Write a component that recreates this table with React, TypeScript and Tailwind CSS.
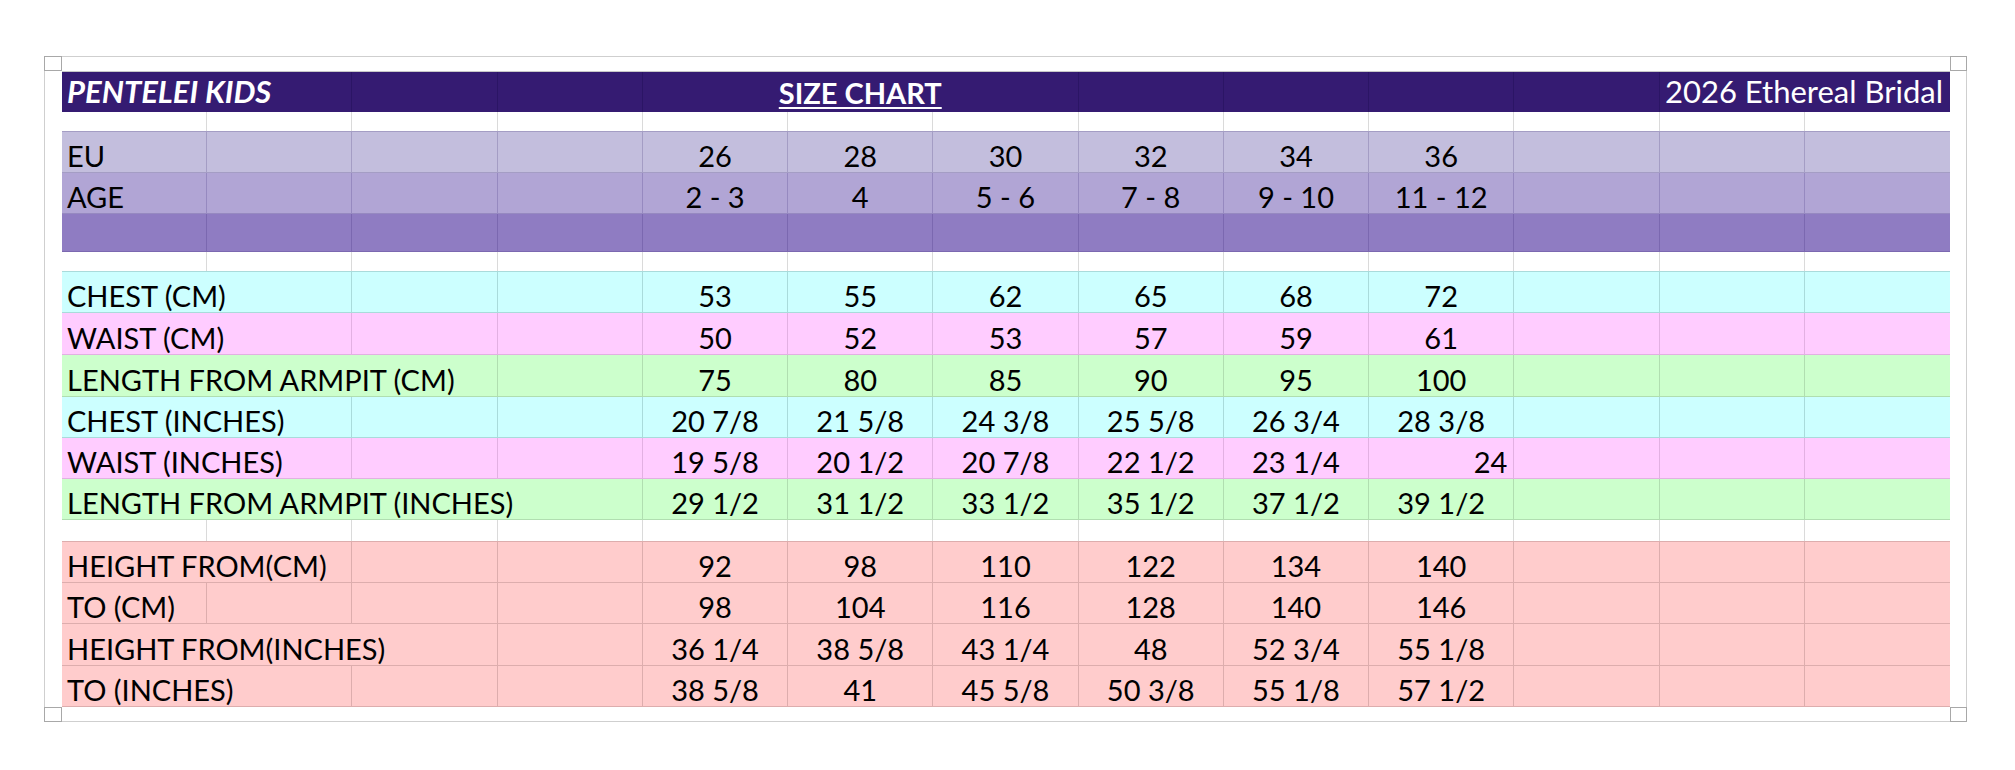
import React from "react";

type DataRow = {
  label: string;
  span: 1 | 2 | 3 | 4;
  values: string[];
  bg: string;
  line: string;
  h: string;
  rightLast?: boolean;
};

const spanCls = {
  1: "col-span-1",
  2: "col-span-2",
  3: "col-span-3",
  4: "col-span-4",
};

const empty6 = ["", "", "", "", "", ""];

const lav = { bg: "bg-[#c3bedd]", line: "border-[#a49dc4]" };
const age = { bg: "bg-[#b1a5d5]", line: "border-[#9689c0]" };
const deep = { bg: "bg-[#8f7cc2]", line: "border-[#7b68b0]" };
const cyan = { bg: "bg-[#ccffff]", line: "border-[#a9dbdb]" };
const pink = { bg: "bg-[#ffccff]", line: "border-[#e2b0e2]" };
const green = { bg: "bg-[#ccffcc]", line: "border-[#b0deb0]" };
const rose = { bg: "bg-[#ffcccc]", line: "border-[#ddadad]" };

const topRows: DataRow[] = [
  { label: "EU", span: 1, values: ["26", "28", "30", "32", "34", "36"], ...lav, h: "h-[41px]" },
  { label: "AGE", span: 1, values: ["2 - 3", "4", "5 - 6", "7 - 8", "9 - 10", "11 - 12"], ...age, h: "h-[41px]" },
  { label: "", span: 1, values: empty6, ...deep, h: "h-[38px]" },
];

const bodyRows: DataRow[] = [
  { label: "CHEST (CM)", span: 2, values: ["53", "55", "62", "65", "68", "72"], ...cyan, h: "h-[41px]" },
  { label: "WAIST (CM)", span: 2, values: ["50", "52", "53", "57", "59", "61"], ...pink, h: "h-[42px]" },
  { label: "LENGTH FROM ARMPIT (CM)", span: 3, values: ["75", "80", "85", "90", "95", "100"], ...green, h: "h-[42px]" },
  { label: "CHEST (INCHES)", span: 2, values: ["20 7/8", "21 5/8", "24 3/8", "25 5/8", "26 3/4", "28 3/8"], ...cyan, h: "h-[41px]" },
  { label: "WAIST (INCHES)", span: 2, values: ["19 5/8", "20 1/2", "20 7/8", "22 1/2", "23 1/4", "24"], ...pink, h: "h-[41px]", rightLast: true },
  { label: "LENGTH FROM ARMPIT (INCHES)", span: 4, values: ["29 1/2", "31 1/2", "33 1/2", "35 1/2", "37 1/2", "39 1/2"], ...green, h: "h-[41px]" },
];

const heightRows: DataRow[] = [
  { label: "HEIGHT FROM(CM)", span: 2, values: ["92", "98", "110", "122", "134", "140"], ...rose, h: "h-[41px]" },
  { label: "TO (CM)", span: 1, values: ["98", "104", "116", "128", "140", "146"], ...rose, h: "h-[41px]" },
  { label: "HEIGHT FROM(INCHES)", span: 3, values: ["36 1/4", "38 5/8", "43 1/4", "48", "52 3/4", "55 1/8"], ...rose, h: "h-[42px]" },
  { label: "TO (INCHES)", span: 2, values: ["38 5/8", "41", "45 5/8", "50 3/8", "55 1/8", "57 1/2"], ...rose, h: "h-[41px]" },
];

const text = "flex items-end pb-[2px] leading-none whitespace-nowrap";
const headText = "flex items-end pb-[5px] leading-none whitespace-nowrap";

function SizeRow({ row }: { row: DataRow }) {
  const fillers = 4 - row.span;
  return (
    <div className={`grid grid-cols-[repeat(13,minmax(0,1fr))] border-b ${row.h} ${row.bg} ${row.line}`}>
      <div className={`${spanCls[row.span]} ${text} border-r pl-[5px] ${row.line}`}>{row.label}</div>
      {Array.from({ length: fillers }).map((_, i) => (
        <div key={`f${i}`} className={`border-r ${row.line}`} />
      ))}
      {row.values.map((v, i) => (
        <div
          key={`v${i}`}
          className={`${text} border-r ${row.line} ${
            row.rightLast && i === row.values.length - 1 ? "justify-end pr-[6px]" : "justify-center"
          }`}
        >
          {v}
        </div>
      ))}
      <div className={`border-r ${row.line}`} />
      <div className={`border-r ${row.line}`} />
      <div />
    </div>
  );
}

function BlankRow({ h, line }: { h: string; line: string }) {
  return (
    <div className={`grid grid-cols-[repeat(13,minmax(0,1fr))] border-b bg-white ${h} ${line}`}>
      {Array.from({ length: 13 }).map((_, i) => (
        <div key={i} className={i < 12 ? "border-r border-[#dadada]" : ""} />
      ))}
    </div>
  );
}

function HeaderRow() {
  const cell = "border-r border-[#2b1565]";
  return (
    <div className="grid h-[41px] grid-cols-[repeat(13,minmax(0,1fr))] border-t border-[#c8c8c8] bg-[#351b72] text-white">
      <div className={`col-span-2 ${headText} pl-[5px] text-[31px] font-bold italic ${cell}`}>PENTELEI KIDS</div>
      <div className={cell} />
      <div className={cell} />
      <div className={`col-span-3 ${headText} justify-center font-bold ${cell}`}>
        <span className="underline decoration-2 underline-offset-[3px]">SIZE CHART</span>
      </div>
      <div className={cell} />
      <div className={cell} />
      <div className={cell} />
      <div className={cell} />
      <div className={`col-span-2 ${headText} justify-end pr-[7px] text-[31px]`}>2026 Ethereal Bridal</div>
    </div>
  );
}

export default function App() {
  return (
    <div className="min-h-screen bg-white pl-[44px] pt-[56px] text-[29px] text-black [font-family:Lato,'Open_Sans',sans-serif]">
      <div className="grid w-[1923px] grid-cols-[18px_1888px_17px] grid-rows-[15px_636px_15px]">
        <div className="border border-[#a8a8a8] bg-white" />
        <div className="border-t border-[#cfcfcf]" />
        <div className="border border-[#a8a8a8] bg-white" />

        <div className="border-l border-[#cfcfcf]" />
        <div className="flex flex-col">
          <HeaderRow />
          <BlankRow h="h-[20px]" line={lav.line} />
          {topRows.map((r) => (
            <SizeRow key={r.label || "band"} row={r} />
          ))}
          <BlankRow h="h-[20px]" line={cyan.line} />
          {bodyRows.map((r) => (
            <SizeRow key={r.label} row={r} />
          ))}
          <BlankRow h="h-[22px]" line={rose.line} />
          {heightRows.map((r) => (
            <SizeRow key={r.label} row={r} />
          ))}
        </div>
        <div className="border-r border-[#cfcfcf]" />

        <div className="border border-[#a8a8a8] bg-white" />
        <div className="border-b border-[#cfcfcf]" />
        <div className="border border-[#a8a8a8] bg-white" />
      </div>
    </div>
  );
}
